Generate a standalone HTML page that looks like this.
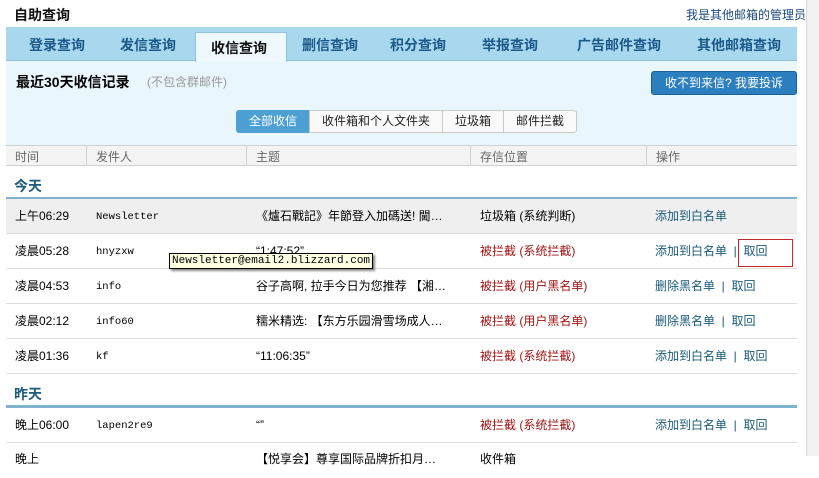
<!DOCTYPE html><html><head><meta charset="utf-8"><style>
*{margin:0;padding:0;box-sizing:border-box}
body{width:819px;height:456px;overflow:hidden;background:#fff;font-family:"Liberation Sans","Noto Sans CJK SC",sans-serif;font-size:12px;color:#000;position:relative}
.a{position:absolute;white-space:nowrap}
.sb{position:absolute;left:806px;top:0;width:13px;height:456px;background:#f2f2f2;border-left:1px solid #d8d8d8}
.tabs{position:absolute;left:6px;top:27px;width:791px;height:34px;background:#a9d8ee;border-bottom:1px solid #8fc3dc}
.tab{position:absolute;top:8px;font-size:14px;font-weight:bold;color:#1a5a8a}
.act{position:absolute;left:195px;top:32px;width:92px;height:30px;background:#eef8fd;border:1px solid #8fc3dc;border-bottom:none}
.panel{position:absolute;left:6px;top:61px;width:791px;height:84px;background:#e9f6fc}
.btn{position:absolute;left:651px;top:71px;width:146px;height:24px;background:#2b7fbf;border:1px solid #1c5f93;border-radius:3px;color:#fff;font-size:12px;text-align:center;line-height:22px}
.seg{position:absolute;top:110px;height:23px;border:1px solid #c8c8c8;background:#fafafa;line-height:21px;text-align:center;font-size:12px;color:#222}
.th{position:absolute;left:6px;top:145px;width:791px;height:21px;background:#f4f4f4;border-top:1px solid #d0d0d0;border-bottom:1px solid #d0d0d0}
.th span{position:absolute;top:2px;color:#666}
.th i{position:absolute;top:0;width:1px;height:20px;background:#d0d0d0}
.row{position:absolute;left:6px;width:791px;height:35px;border-bottom:1px solid #dedede}
.row span{position:absolute;top:9px;line-height:16px;height:16px;white-space:nowrap}
.row span.m{top:10px}
.m{font-family:"Liberation Mono",monospace;font-size:10.5px}
.r{color:#a01515}.l{color:#1a5a7a}
.day{position:absolute;left:14px;font-size:14px;font-weight:bold;color:#1a5a7a}
.bl{position:absolute;left:6px;width:791px;height:3px;background:#7fb2cc}
</style></head><body>
<div class="sb"></div>
<div class="a" style="left:14px;top:5px;font-size:14px;font-weight:bold;color:#111">自助查询</div>
<div class="a" style="left:686px;top:6px;color:#1a4a7a">我是其他邮箱的管理员</div>
<div class="tabs">
<span class="tab" style="left:23px">登录查询</span><span class="tab" style="left:114px">发信查询</span>
<span class="tab" style="left:296px">删信查询</span><span class="tab" style="left:384px">积分查询</span>
<span class="tab" style="left:476px">举报查询</span><span class="tab" style="left:571px">广告邮件查询</span><span class="tab" style="left:691px">其他邮箱查询</span>
</div>
<div class="panel"></div>
<div class="act"><span class="a" style="left:15px;top:5px;font-size:14px;font-weight:bold;color:#111">收信查询</span></div>
<div class="a" style="left:16px;top:72px;font-size:14px;font-weight:bold">最近30天收信记录</div>
<div class="a" style="left:147px;top:73px;color:#999">(不包含群邮件)</div>
<div class="btn">收不到来信? 我要投诉</div>
<div class="seg" style="left:236px;width:74px;background:#4da0d2;color:#fff;border-color:#4da0d2;border-radius:3px 0 0 3px">全部收信</div>
<div class="seg" style="left:309px;width:134px">收件箱和个人文件夹</div>
<div class="seg" style="left:442px;width:62px">垃圾箱</div>
<div class="seg" style="left:503px;width:74px;border-radius:0 3px 3px 0">邮件拦截</div>
<div class="th"><span style="left:9px">时间</span><i style="left:80px"></i><span style="left:90px">发件人</span><i style="left:240px"></i><span style="left:250px">主题</span><i style="left:464px"></i><span style="left:474px">存信位置</span><i style="left:640px"></i><span style="left:650px">操作</span></div>
<div class="day" style="top:176px">今天</div><div class="bl" style="top:197px"></div>
<div class="row" style="top:199px;background:#efefef"><span style="left:9px">上午06:29</span><span class="m" style="left:90px">Newsletter</span><span style="left:250px">《爐石戰記》年節登入加碼送! 閫…</span><span style="left:474px">垃圾箱 (系统判断)</span><span class="l" style="left:649px">添加到白名单</span></div>
<div class="row" style="top:234px"><span style="left:9px">凌晨05:28</span><span class="m" style="left:90px">hnyzxw</span><span style="left:250px">“1:47:52”</span><span class="r" style="left:474px">被拦截 (系统拦截)</span><span class="l" style="left:649px">添加到白名单 &nbsp;| &nbsp;取回</span></div>
<div class="row" style="top:269px"><span style="left:9px">凌晨04:53</span><span class="m" style="left:90px">info</span><span style="left:250px">谷子高啊, 拉手今日为您推荐 【湘…</span><span class="r" style="left:474px">被拦截 (用户黑名单)</span><span class="l" style="left:649px">删除黑名单 &nbsp;| &nbsp;取回</span></div>
<div class="row" style="top:304px"><span style="left:9px">凌晨02:12</span><span class="m" style="left:90px">info60</span><span style="left:250px">糯米精选: 【东方乐园滑雪场成人…</span><span class="r" style="left:474px">被拦截 (用户黑名单)</span><span class="l" style="left:649px">删除黑名单 &nbsp;| &nbsp;取回</span></div>
<div class="row" style="top:339px"><span style="left:9px">凌晨01:36</span><span class="m" style="left:90px">kf</span><span style="left:250px">“11:06:35”</span><span class="r" style="left:474px">被拦截 (系统拦截)</span><span class="l" style="left:649px">添加到白名单 &nbsp;| &nbsp;取回</span></div>
<div class="day" style="top:384px">昨天</div><div class="bl" style="top:405px"></div>
<div class="row" style="top:408px"><span style="left:9px">晚上06:00</span><span class="m" style="left:90px">lapen2re9</span><span style="left:250px">“”</span><span class="r" style="left:474px">被拦截 (系统拦截)</span><span class="l" style="left:649px">添加到白名单 &nbsp;| &nbsp;取回</span></div>
<div class="row" style="top:443px;border:none"><span style="left:9px;top:8px">晚上</span><span style="left:250px;top:8px">【悦享会】尊享国际品牌折扣月…</span><span style="left:474px;top:8px">收件箱</span></div>
<div class="a" style="left:738px;top:239px;width:55px;height:28px;border:1px solid #c0282d"></div>
<div class="a m" style="left:169px;top:253px;height:16px;padding:0 2px;background:#ffffe1;border:1px solid #000;box-shadow:2px 2px 2px #888;line-height:14px;color:#000;font-size:11px">Newsletter@email2.blizzard.com</div>
</body></html>
